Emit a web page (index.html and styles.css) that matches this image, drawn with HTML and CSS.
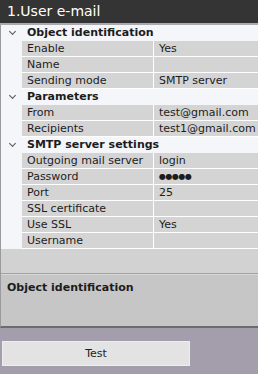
FILE: index.html
```html
<!DOCTYPE html>
<html lang="en">
<head>
    <meta charset="UTF-8">
    <title>1.User e-mail</title>
    <link rel="stylesheet" href="styles.css">
</head>
<body>
    <div class="panel">
        <div class="title">1.User e-mail</div>

        <div class="grid">
            <div class="cat"><span class="caret"></span>Object identification</div>
            <div class="row"><span class="name">Enable</span><span class="val">Yes</span></div>
            <div class="row"><span class="name">Name</span><span class="val"></span></div>
            <div class="row"><span class="name">Sending mode</span><span class="val">SMTP server</span></div>

            <div class="cat"><span class="caret"></span>Parameters</div>
            <div class="row"><span class="name">From</span><span class="val">test@gmail.com</span></div>
            <div class="row"><span class="name">Recipients</span><span class="val">test1@gmail.com</span></div>

            <div class="cat"><span class="caret"></span>SMTP server settings</div>
            <div class="row"><span class="name">Outgoing mail server</span><span class="val">login</span></div>
            <div class="row"><span class="name">Password</span><span class="val dots">●●●●●</span></div>
            <div class="row"><span class="name">Port</span><span class="val">25</span></div>
            <div class="row"><span class="name">SSL certificate</span><span class="val"></span></div>
            <div class="row"><span class="name">Use SSL</span><span class="val">Yes</span></div>
            <div class="row"><span class="name">Username</span><span class="val"></span></div>
        </div>

        <div class="filler"></div>

        <div class="desc">Object identification</div>
    </div>

    <div class="footer">
        <button class="btn">Test</button>
    </div>
</body>
</html>
```

FILE: styles.css
```css
body {
    margin: 0;
    background-color: #a49dab;
    font-family: 'DejaVu Sans', Verdana, sans-serif;
    font-size: 11px;
    color: #1c1c1c;
    width: 258px;
}
.panel {
    border-left: 1px solid #9a9a9a;
    border-bottom: 2px solid #6c6c6c;
    background-color: #d2d2d2;
}
.title {
    background-color: #343434;
    color: #ffffff;
    font-size: 14px;
    height: 23px;
    line-height: 23px;
    padding-left: 7px;
    margin-left: -1px;
    border-bottom: 2px solid #a9a9b0;
}
.grid {
    background-color: #f4f6fa;
}
.cat {
    height: 16px;
    line-height: 16px;
    font-weight: bold;
    padding-left: 26px;
    position: relative;
}
.caret {
    position: absolute;
    left: 9px;
    top: 4px;
    width: 4px;
    height: 4px;
    border-right: 1.5px solid #555;
    border-bottom: 1.5px solid #555;
    transform: rotate(45deg);
}
.row {
    display: flex;
    margin-left: 21px;
    height: 16px;
    line-height: 15px;
}
.row .name,
.row .val {
    background-color: #d4d4d4;
    border-bottom: 1px solid #ffffff;
    padding-left: 5px;
    white-space: nowrap;
    overflow: hidden;
}
.row .name {
    width: 126px;
    border-right: 1px solid #ffffff;
}
.row .val {
    flex: 1;
}
.dots {
    font-size: 8px;
    letter-spacing: -0.5px;
}
.filler {
    height: 24px;
    border-bottom: 1px solid #a2a2a2;
}
.desc {
    background-color: #c6c6c6;
    border-top: 1px solid #d8d8d8;
    height: 52px;
    padding: 6px 6px;
    box-sizing: border-box;
    font-weight: bold;
}
.footer {
    padding: 13px 0 0 2px;
}
.btn {
    width: 188px;
    height: 25px;
    background-color: #e3e3e3;
    border: 1px solid #eeeeee;
    font-family: 'DejaVu Sans', Verdana, sans-serif;
    font-size: 11px;
    color: #222;
    padding: 0;
}
```
